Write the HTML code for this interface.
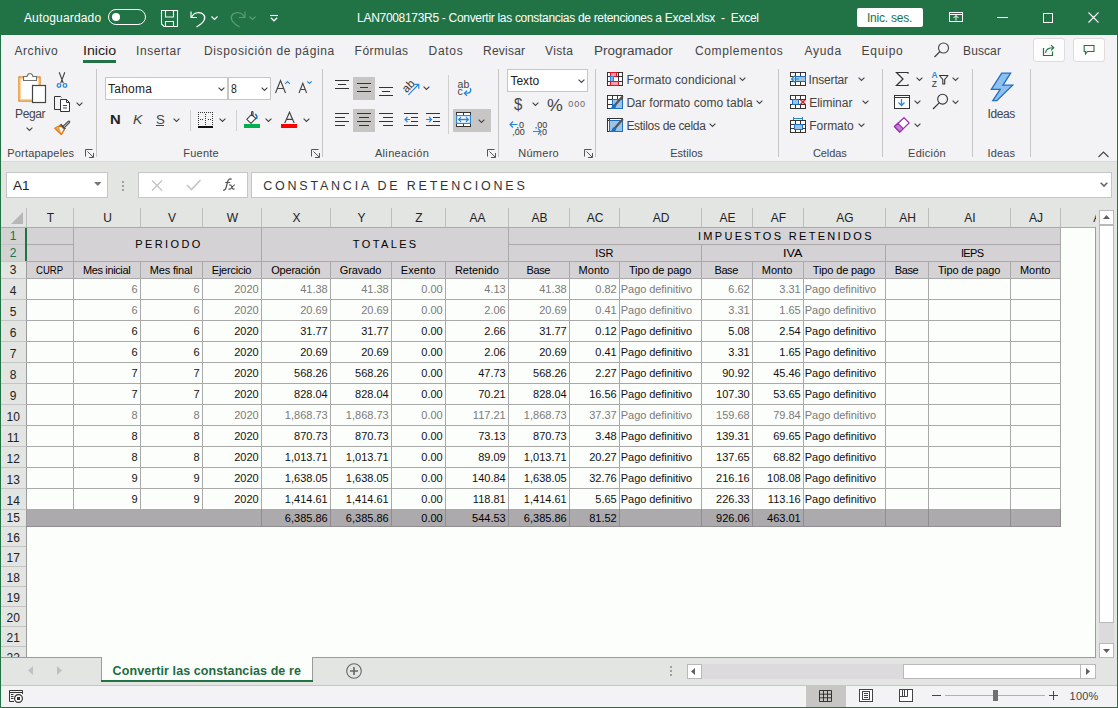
<!DOCTYPE html>
<html><head><meta charset="utf-8"><title>Excel</title>
<style>
html,body{margin:0;padding:0;}
body{width:1118px;height:708px;overflow:hidden;position:relative;background:#fcfefc;font-family:'Liberation Sans', sans-serif;}
.a{position:absolute;}
.t{position:absolute;white-space:pre;transform-origin:0 0;}
svg.a{overflow:visible;}
</style></head><body>
<div class="a" style="left:0px;top:0px;width:1118px;height:35px;background:#217346;"></div>
<div class="t" style="left:23.90px;top:11.80px;font-size:12px;line-height:12px;color:#ffffff;letter-spacing:0.163px;">Autoguardado</div>
<div class="a" style="left:108px;top:9px;width:38px;height:16px;border:1px solid #fff;border-radius:8px;box-sizing:border-box;"></div>
<div class="a" style="left:112px;top:13px;width:8px;height:8px;background:#fff;border-radius:50%;"></div>
<svg class="a" style="left:161px;top:10px;" width="17" height="17" viewBox="0 0 17 17"><path d="M0.5 0.5H16.5V16.5H3L0.5 14Z" fill="none" stroke="#fff" stroke-width="1.1"/><path d="M4.5 0.5V7H12.5V0.5M4.5 16.5V11.5H12.5V16.5" fill="none" stroke="#fff" stroke-width="1.1"/></svg>
<svg class="a" style="left:189px;top:10px;" width="20" height="18" viewBox="0 0 20 18"><path d="M2 1.5V7.5H8" fill="none" stroke="#fff" stroke-width="1.2"/><path d="M2.5 7C5 2.5 11 1 14.5 4.5C17.5 8 15.5 12 7.5 17" fill="none" stroke="#fff" stroke-width="1.2"/></svg>
<svg class="a" style="left:210.5px;top:15.5px;" width="7" height="4" viewBox="0 0 7 4"><path d="M0.5 0.5l3 3 3-3" fill="none" stroke="#fff" stroke-width="1.2"/></svg>
<svg class="a" style="left:227px;top:10px;" width="20" height="18" viewBox="0 0 20 18"><g transform="translate(20,0) scale(-1,1)"><path d="M2 1.5V7.5H8" fill="none" stroke="#5b9c76" stroke-width="1.2"/><path d="M2.5 7C5 2.5 11 1 14.5 4.5C17.5 8 15.5 12 7.5 17" fill="none" stroke="#5b9c76" stroke-width="1.2"/></g></svg>
<svg class="a" style="left:248.5px;top:15.5px;" width="7" height="4" viewBox="0 0 7 4"><path d="M0.5 0.5l3 3 3-3" fill="none" stroke="#5b9c76" stroke-width="1.1"/></svg>
<svg class="a" style="left:269.5px;top:14px;" width="8" height="8" viewBox="0 0 8 8"><path d="M0 1.5h8" stroke="#fff" stroke-width="1.1"/><path d="M0.8 3.8l3.2 3 3.2-3" fill="none" stroke="#fff" stroke-width="1.3"/></svg>
<div class="t" style="left:357.10px;top:12.30px;font-size:12px;line-height:12px;color:#ffffff;letter-spacing:-0.308px;">LAN7008173R5 - Convertir las constancias de retenciones a Excel.xlsx  -  Excel</div>
<div class="a" style="left:857px;top:8px;width:66px;height:19px;background:#ffffff;border-radius:2px;"></div>
<div class="t" style="left:867.00px;top:12.30px;font-size:12px;line-height:12px;color:#217346;letter-spacing:-0.218px;">Inic. ses.</div>
<svg class="a" style="left:949px;top:12px;" width="14" height="10" viewBox="0 0 14 10"><rect x="0.5" y="0.5" width="13" height="9" fill="none" stroke="#fff"/><path d="M0.5 2.5h13" stroke="#fff"/><path d="M7 8.5v-5M4.5 6l2.5-2.5 2.5 2.5" fill="none" stroke="#fff"/></svg>
<div class="a" style="left:997px;top:17px;width:11px;height:1px;background:#ffffff;"></div>
<div class="a" style="left:1043px;top:13px;width:10px;height:10px;border:1px solid #fff;box-sizing:border-box;"></div>
<svg class="a" style="left:1088px;top:12px;" width="11" height="11" viewBox="0 0 11 11"><path d="M0.5 0.5l10 10M10.5 0.5l-10 10" stroke="#fff" stroke-width="1.1"/></svg>
<div class="a" style="left:0px;top:35px;width:1118px;height:126px;background:#f3f2f5;"></div>
<div class="a" style="left:0px;top:161px;width:1118px;height:1px;background:#dadada;"></div>
<div class="t" style="left:14.60px;top:45.00px;font-size:12px;line-height:12px;color:#444444;letter-spacing:0.514px;">Archivo</div>
<div class="t" style="left:83.00px;top:45.00px;font-size:12px;line-height:12px;color:#222;transform:scaleX(1.1815);">Inicio</div>
<div class="t" style="left:136.10px;top:45.00px;font-size:12px;line-height:12px;color:#444444;letter-spacing:0.559px;">Insertar</div>
<div class="t" style="left:204.00px;top:45.00px;font-size:12px;line-height:12px;color:#444444;letter-spacing:0.644px;">Disposición de página</div>
<div class="t" style="left:354.60px;top:45.00px;font-size:12px;line-height:12px;color:#444444;letter-spacing:0.498px;">Fórmulas</div>
<div class="t" style="left:428.60px;top:45.00px;font-size:12px;line-height:12px;color:#444444;letter-spacing:0.685px;">Datos</div>
<div class="t" style="left:483.00px;top:45.00px;font-size:12px;line-height:12px;color:#444444;letter-spacing:0.235px;">Revisar</div>
<div class="t" style="left:545.10px;top:45.00px;font-size:12px;line-height:12px;color:#444444;letter-spacing:0.358px;">Vista</div>
<div class="t" style="left:593.90px;top:45.00px;font-size:12px;line-height:12px;color:#444444;transform:scaleX(1.1238);">Programador</div>
<div class="t" style="left:694.90px;top:45.00px;font-size:12px;line-height:12px;color:#444444;letter-spacing:0.654px;">Complementos</div>
<div class="t" style="left:804.60px;top:45.00px;font-size:12px;line-height:12px;color:#444444;letter-spacing:0.672px;">Ayuda</div>
<div class="t" style="left:861.60px;top:45.00px;font-size:12px;line-height:12px;color:#444444;letter-spacing:0.765px;">Equipo</div>
<div class="t" style="left:963.10px;top:45.00px;font-size:12px;line-height:12px;color:#444444;letter-spacing:0.088px;">Buscar</div>
<div class="a" style="left:83px;top:60px;width:33px;height:3px;background:#217346;"></div>
<svg class="a" style="left:934px;top:42px;" width="16" height="16" viewBox="0 0 16 16"><circle cx="9.5" cy="6" r="5" fill="none" stroke="#444" stroke-width="1.1"/><path d="M6 9.5l-5.5 5.5" stroke="#444" stroke-width="1.3"/></svg>
<div class="a" style="left:1033px;top:38px;width:32px;height:24px;background:#fcfdfc;border:1px solid #e0dcdc;border-radius:3px;box-sizing:border-box;"></div>
<svg class="a" style="left:1042px;top:43px;" width="15" height="14" viewBox="0 0 15 14"><path d="M1.5 5V12.5H10.5V8.5" fill="none" stroke="#217346" stroke-width="1.2"/><path d="M3.5 9.8C4 6.5 7 4.8 11 4.8M9 2.2L11.8 4.8L9 7.4" fill="none" stroke="#217346" stroke-width="1.1"/></svg>
<div class="a" style="left:1073px;top:38px;width:32px;height:24px;background:#fcfdfc;border:1px solid #e0dcdc;border-radius:3px;box-sizing:border-box;"></div>
<svg class="a" style="left:1083px;top:44px;" width="13" height="12" viewBox="0 0 13 12"><path d="M1.2 1.5H11V7.5H4.5L2.5 10V7.5H1.2Z" fill="none" stroke="#217346" stroke-width="1.1"/></svg>
<div class="a" style="left:96px;top:69px;width:1px;height:88px;background:#c8c6c4;"></div>
<div class="a" style="left:322px;top:69px;width:1px;height:88px;background:#c8c6c4;"></div>
<div class="a" style="left:498px;top:69px;width:1px;height:88px;background:#c8c6c4;"></div>
<div class="a" style="left:595px;top:69px;width:1px;height:88px;background:#c8c6c4;"></div>
<div class="a" style="left:778px;top:69px;width:1px;height:88px;background:#c8c6c4;"></div>
<div class="a" style="left:882px;top:69px;width:1px;height:88px;background:#c8c6c4;"></div>
<div class="a" style="left:972px;top:69px;width:1px;height:88px;background:#c8c6c4;"></div>
<div class="a" style="left:1030px;top:69px;width:1px;height:88px;background:#c8c6c4;"></div>
<div class="a" style="left:190px;top:110px;width:1px;height:21px;background:#d0d0d0;"></div>
<div class="a" style="left:236px;top:110px;width:1px;height:21px;background:#d0d0d0;"></div>
<div class="a" style="left:448px;top:75px;width:1px;height:59px;background:#d0d0d0;"></div>
<div class="t" style="left:7.30px;top:147.50px;font-size:11px;line-height:11px;color:#444444;letter-spacing:0.179px;">Portapapeles</div>
<div class="t" style="left:183.30px;top:147.50px;font-size:11px;line-height:11px;color:#444444;letter-spacing:0.210px;">Fuente</div>
<div class="t" style="left:374.90px;top:147.50px;font-size:11px;line-height:11px;color:#444444;letter-spacing:0.348px;">Alineación</div>
<div class="t" style="left:518.30px;top:147.50px;font-size:11px;line-height:11px;color:#444444;letter-spacing:0.255px;">Número</div>
<div class="t" style="left:670.20px;top:147.50px;font-size:11px;line-height:11px;color:#444444;letter-spacing:0.032px;">Estilos</div>
<div class="t" style="left:813.00px;top:147.50px;font-size:11px;line-height:11px;color:#444444;letter-spacing:-0.110px;">Celdas</div>
<div class="t" style="left:908.10px;top:147.50px;font-size:11px;line-height:11px;color:#444444;letter-spacing:0.254px;">Edición</div>
<div class="t" style="left:987.60px;top:147.50px;font-size:11px;line-height:11px;color:#444444;letter-spacing:0.095px;">Ideas</div>
<svg class="a" style="left:85px;top:149px;" width="9" height="9" viewBox="0 0 9 9"><path d="M0.5 7.5v-7h7" fill="none" stroke="#555"/><path d="M2.5 2.5l5.5 5.5M8.5 4v4.5h-4.5" fill="none" stroke="#555"/></svg>
<svg class="a" style="left:311px;top:149px;" width="9" height="9" viewBox="0 0 9 9"><path d="M0.5 7.5v-7h7" fill="none" stroke="#555"/><path d="M2.5 2.5l5.5 5.5M8.5 4v4.5h-4.5" fill="none" stroke="#555"/></svg>
<svg class="a" style="left:487px;top:149px;" width="9" height="9" viewBox="0 0 9 9"><path d="M0.5 7.5v-7h7" fill="none" stroke="#555"/><path d="M2.5 2.5l5.5 5.5M8.5 4v4.5h-4.5" fill="none" stroke="#555"/></svg>
<svg class="a" style="left:584px;top:149px;" width="9" height="9" viewBox="0 0 9 9"><path d="M0.5 7.5v-7h7" fill="none" stroke="#555"/><path d="M2.5 2.5l5.5 5.5M8.5 4v4.5h-4.5" fill="none" stroke="#555"/></svg>
<svg class="a" style="left:18px;top:72px;" width="30" height="32" viewBox="0 0 30 32"><rect x="1" y="5" width="21" height="24" fill="#fff" stroke="#e07800" stroke-width="1.2"/><rect x="2.5" y="6.5" width="18" height="21" fill="none" stroke="#fcd49a" stroke-width="1.2"/><path d="M5.5 8.5v-4h3.5c0.5-2 1.5-3 3-3s2.5 1 3 3h3.5v4z" fill="#fff" stroke="#6f6f6f" stroke-width="1.1"/><rect x="14.5" y="13.5" width="13" height="17" fill="#fff" stroke="#444" stroke-width="1.2"/></svg>
<div class="t" style="left:15.10px;top:107.80px;font-size:12px;line-height:12px;color:#444444;letter-spacing:-0.383px;">Pegar</div>
<svg class="a" style="left:26px;top:127px;" width="7" height="4" viewBox="0 0 7 4"><path d="M0.6 0.6l2.9 2.9 2.9-2.9" fill="none" stroke="#444" stroke-width="1.1"/></svg>
<svg class="a" style="left:56px;top:72px;" width="12" height="16" viewBox="0 0 12 16"><path d="M3.2 0.3L7.2 11M8.8 0.3L4.8 11" stroke="#444" stroke-width="1.1"/><circle cx="3" cy="13.5" r="1.8" fill="none" stroke="#2b88d8" stroke-width="1.3"/><circle cx="9" cy="13.5" r="1.8" fill="none" stroke="#2b88d8" stroke-width="1.3"/></svg>
<svg class="a" style="left:54px;top:95px;" width="17" height="17" viewBox="0 0 17 17"><path d="M6 14.5H0.5V1.5H6.5L7.5 2.5" fill="none" stroke="#333"/><path d="M6.5 4.5H12.5L15.5 7.5V16.5H6.5Z" fill="#fff" stroke="#333"/><path d="M12.5 4.5V7.5H15.5" fill="none" stroke="#333"/><path d="M9 10.5H13M9 13H13" stroke="#444"/></svg>
<svg class="a" style="left:76px;top:102px;" width="7" height="4" viewBox="0 0 7 4"><path d="M0.6 0.6l2.9 2.9 2.9-2.9" fill="none" stroke="#444" stroke-width="1.1"/></svg>
<svg class="a" style="left:54px;top:119px;" width="17" height="16" viewBox="0 0 17 16"><path d="M0.8 9.3L6.3 6.3L10.4 10.4L7.4 15.4Z" fill="#fff" stroke="#e07000" stroke-width="1.3" stroke-linejoin="round"/><path d="M1.5 9.3L5 7.5L7.5 15Z" fill="#f0a050"/><path d="M9.3 7.2L14.2 2.3C15 1.5 16.3 2.6 15.4 3.5L10.6 8.4" fill="#fff" stroke="#444" stroke-width="1.1"/><path d="M6.6 5.2L11.4 10" stroke="#444" stroke-width="1.6"/></svg>
<div class="a" style="left:105px;top:77px;width:123px;height:23px;background:#ffffff;border:1px solid #c8c6c4;box-sizing:border-box;"></div>
<div class="a" style="left:228px;top:77px;width:43px;height:23px;background:#ffffff;border:1px solid #c8c6c4;box-sizing:border-box;"></div>
<div class="t" style="left:108.00px;top:82.80px;font-size:12px;line-height:12px;color:#222;letter-spacing:0.239px;">Tahoma</div>
<svg class="a" style="left:218px;top:87px;" width="7" height="4" viewBox="0 0 7 4"><path d="M0.6 0.6l2.9 2.9 2.9-2.9" fill="none" stroke="#444" stroke-width="1.1"/></svg>
<div class="t" style="left:230.60px;top:82.80px;font-size:12px;line-height:12px;color:#222;transform:scaleX(0.8673);">8</div>
<svg class="a" style="left:261px;top:87px;" width="7" height="4" viewBox="0 0 7 4"><path d="M0.6 0.6l2.9 2.9 2.9-2.9" fill="none" stroke="#444" stroke-width="1.1"/></svg>
<svg class="a" style="left:274px;top:79px;" width="40" height="15" viewBox="0 0 40 15"><path d="M1.5 14L6.5 1.5L11.5 14M3.3 9.5H9.7" fill="none" stroke="#444" stroke-width="1.15"/><path d="M11.2 4.8L13.5 2.5L15.8 4.8" fill="none" stroke="#2b88d8" stroke-width="1.2"/><path d="M25 14L28.8 4.3L32.6 14M26.4 10.5H31.2" fill="none" stroke="#444" stroke-width="1.1"/><path d="M33.3 2.3L35.5 4.5L37.7 2.3" fill="none" stroke="#2b88d8" stroke-width="1.2"/></svg>
<div class="t" style="left:110.10px;top:113.60px;font-size:12px;line-height:12px;color:#222;font-weight:700;transform:scaleX(1.2339);">N</div>
<div class="t" style="left:132.60px;top:113.60px;font-size:12px;line-height:12px;color:#444;font-family:'Liberation Sans', sans-serif;font-style:italic;transform:scaleX(1.1727);">K</div>
<div class="t" style="left:155.60px;top:113.60px;font-size:12px;line-height:12px;color:#444;transform:scaleX(1.0979);">S</div>
<div class="a" style="left:156px;top:125px;width:8px;height:1px;background:#444;"></div>
<svg class="a" style="left:173px;top:118px;" width="7" height="4" viewBox="0 0 7 4"><path d="M0.6 0.6l2.9 2.9 2.9-2.9" fill="none" stroke="#444" stroke-width="1.1"/></svg>
<svg class="a" style="left:198px;top:112px;" width="16" height="16" viewBox="0 0 16 16"><rect x="0" y="0" width="1" height="1" fill="#333"/><rect x="2" y="0" width="1" height="1" fill="#333"/><rect x="4" y="0" width="1" height="1" fill="#333"/><rect x="6" y="0" width="1" height="1" fill="#333"/><rect x="8" y="0" width="1" height="1" fill="#333"/><rect x="10" y="0" width="1" height="1" fill="#333"/><rect x="12" y="0" width="1" height="1" fill="#333"/><rect x="14" y="0" width="1" height="1" fill="#333"/><rect x="0" y="2" width="1" height="1" fill="#333"/><rect x="14" y="2" width="1" height="1" fill="#333"/><rect x="7" y="2" width="1" height="1" fill="#333"/><rect x="0" y="4" width="1" height="1" fill="#333"/><rect x="14" y="4" width="1" height="1" fill="#333"/><rect x="7" y="4" width="1" height="1" fill="#333"/><rect x="0" y="6" width="1" height="1" fill="#333"/><rect x="14" y="6" width="1" height="1" fill="#333"/><rect x="7" y="6" width="1" height="1" fill="#333"/><rect x="0" y="8" width="1" height="1" fill="#333"/><rect x="14" y="8" width="1" height="1" fill="#333"/><rect x="7" y="8" width="1" height="1" fill="#333"/><rect x="0" y="10" width="1" height="1" fill="#333"/><rect x="14" y="10" width="1" height="1" fill="#333"/><rect x="7" y="10" width="1" height="1" fill="#333"/><rect x="0" y="12" width="1" height="1" fill="#333"/><rect x="14" y="12" width="1" height="1" fill="#333"/><rect x="7" y="12" width="1" height="1" fill="#333"/><rect x="2" y="7" width="1" height="1" fill="#333"/><rect x="4" y="7" width="1" height="1" fill="#333"/><rect x="10" y="7" width="1" height="1" fill="#333"/><rect x="12" y="7" width="1" height="1" fill="#333"/><rect x="0" y="14" width="15" height="2" fill="#111"/></svg>
<svg class="a" style="left:219px;top:118px;" width="7" height="4" viewBox="0 0 7 4"><path d="M0.6 0.6l2.9 2.9 2.9-2.9" fill="none" stroke="#444" stroke-width="1.1"/></svg>
<svg class="a" style="left:243px;top:110px;" width="19" height="18" viewBox="0 0 19 18"><path d="M3.8 9.3L8.6 4.3L12.8 8.5L8 13.3Z" fill="#fff" stroke="#444" stroke-width="1.1" stroke-linejoin="round"/><path d="M8.6 4.3V2.2C8.6 1.3 10 1.3 10 2.2V6.5" fill="none" stroke="#444" stroke-width="1.1"/><path d="M12 4.2C13.4 4.6 14.2 6.5 13.6 9" fill="none" stroke="#1e6fc4" stroke-width="1.5"/><rect x="1" y="14" width="16" height="4" fill="#00b050"/></svg>
<svg class="a" style="left:265px;top:118px;" width="7" height="4" viewBox="0 0 7 4"><path d="M0.6 0.6l2.9 2.9 2.9-2.9" fill="none" stroke="#444" stroke-width="1.1"/></svg>
<svg class="a" style="left:283px;top:111px;" width="13" height="13" viewBox="0 0 13 13"><path d="M1.8 12L6.5 1.2L11.2 12M3.6 8.3H9.4" fill="none" stroke="#444" stroke-width="1.15"/></svg>
<div class="a" style="left:281px;top:124px;width:16px;height:4px;background:#ff0000;"></div>
<svg class="a" style="left:303px;top:118px;" width="7" height="4" viewBox="0 0 7 4"><path d="M0.6 0.6l2.9 2.9 2.9-2.9" fill="none" stroke="#444" stroke-width="1.1"/></svg>
<div class="a" style="left:353px;top:77px;width:22px;height:23px;background:#c8c6c4;"></div>
<div class="a" style="left:353px;top:109px;width:22px;height:23px;background:#c8c6c4;"></div>
<div class="a" style="left:335px;top:80px;width:14px;height:1px;background:#333;"></div>
<div class="a" style="left:338px;top:84px;width:8px;height:1px;background:#333;"></div>
<div class="a" style="left:335px;top:88px;width:14px;height:1px;background:#333;"></div>
<div class="a" style="left:357px;top:83px;width:14px;height:1px;background:#333;"></div>
<div class="a" style="left:360px;top:87px;width:8px;height:1px;background:#333;"></div>
<div class="a" style="left:357px;top:91px;width:14px;height:1px;background:#333;"></div>
<div class="a" style="left:379px;top:87px;width:14px;height:1px;background:#333;"></div>
<div class="a" style="left:382px;top:91px;width:8px;height:1px;background:#333;"></div>
<div class="a" style="left:379px;top:95px;width:14px;height:1px;background:#333;"></div>
<div class="a" style="left:335px;top:113px;width:14px;height:1px;background:#333;"></div>
<div class="a" style="left:335px;top:117px;width:10px;height:1px;background:#333;"></div>
<div class="a" style="left:335px;top:121px;width:14px;height:1px;background:#333;"></div>
<div class="a" style="left:335px;top:125px;width:10px;height:1px;background:#333;"></div>
<div class="a" style="left:357px;top:113px;width:14px;height:1px;background:#333;"></div>
<div class="a" style="left:359px;top:117px;width:10px;height:1px;background:#333;"></div>
<div class="a" style="left:357px;top:121px;width:14px;height:1px;background:#333;"></div>
<div class="a" style="left:359px;top:125px;width:10px;height:1px;background:#333;"></div>
<div class="a" style="left:379px;top:113px;width:14px;height:1px;background:#333;"></div>
<div class="a" style="left:383px;top:117px;width:10px;height:1px;background:#333;"></div>
<div class="a" style="left:379px;top:121px;width:14px;height:1px;background:#333;"></div>
<div class="a" style="left:383px;top:125px;width:10px;height:1px;background:#333;"></div>
<div class="a" style="left:404px;top:113px;width:14px;height:1px;background:#333;"></div>
<div class="a" style="left:404px;top:125px;width:14px;height:1px;background:#333;"></div>
<div class="a" style="left:411px;top:117px;width:7px;height:1px;background:#333;"></div>
<div class="a" style="left:411px;top:121px;width:7px;height:1px;background:#333;"></div>
<svg class="a" style="left:404px;top:116px;" width="7" height="7" viewBox="0 0 7 7"><path d="M6 3.5h-5M3.5 1l-2.5 2.5 2.5 2.5" fill="none" stroke="#2b88d8" stroke-width="1.2"/></svg>
<div class="a" style="left:426px;top:113px;width:14px;height:1px;background:#333;"></div>
<div class="a" style="left:426px;top:125px;width:14px;height:1px;background:#333;"></div>
<div class="a" style="left:433px;top:117px;width:7px;height:1px;background:#333;"></div>
<div class="a" style="left:433px;top:121px;width:7px;height:1px;background:#333;"></div>
<svg class="a" style="left:426px;top:116px;" width="7" height="7" viewBox="0 0 7 7"><path d="M0 3.5h5M3 1l2.5 2.5-2.5 2.5" fill="none" stroke="#2b88d8" stroke-width="1.2"/></svg>
<svg class="a" style="left:402px;top:78px;" width="20" height="18" viewBox="0 0 20 18"><text x="0" y="0" transform="translate(4.6,15.2) rotate(-45)" font-family="Liberation Sans" font-size="11.5" fill="#333">ab</text><path d="M6.3 16.8L16.5 6.5M12.3 6.3H16.8V10.8" fill="none" stroke="#2b88d8" stroke-width="1.2"/></svg>
<svg class="a" style="left:423px;top:86px;" width="7" height="4" viewBox="0 0 7 4"><path d="M0.6 0.6l2.9 2.9 2.9-2.9" fill="none" stroke="#444" stroke-width="1.1"/></svg>
<svg class="a" style="left:457px;top:80px;" width="17" height="17" viewBox="0 0 17 17"><text x="0.6" y="8.4" font-family="Liberation Sans" font-size="10.5" fill="#444">ab</text><text x="0.6" y="15.3" font-family="Liberation Sans" font-size="10.5" fill="#444">c</text><path d="M13.2 8.2C14.6 10 13.6 13.2 10.5 13.2H7.6M10 10.8L7.4 13.2L10 15.8" fill="none" stroke="#2b88d8" stroke-width="1.3"/></svg>
<div class="a" style="left:453px;top:109px;width:38px;height:23px;background:#c8c6c4;"></div>
<svg class="a" style="left:456px;top:112px;" width="16" height="15" viewBox="0 0 16 15"><rect x="0.5" y="0.5" width="14" height="14" fill="#fff" stroke="#333"/><path d="M7.5 0.5V3.5M7.5 11.5V14.5" stroke="#333"/><rect x="0.6" y="3.6" width="13.8" height="7.8" fill="#fff" stroke="#2b88d8" stroke-width="1.2"/><path d="M2.6 7.5H12.4M5 5.1L2.6 7.5L5 9.9M10 5.1L12.4 7.5L10 9.9" fill="none" stroke="#2b88d8" stroke-width="1.3"/></svg>
<svg class="a" style="left:478px;top:119px;" width="7" height="4" viewBox="0 0 7 4"><path d="M0.6 0.6l2.9 2.9 2.9-2.9" fill="none" stroke="#444" stroke-width="1.1"/></svg>
<div class="a" style="left:507px;top:69px;width:81px;height:23px;background:#ffffff;border:1px solid #c8c6c4;box-sizing:border-box;"></div>
<div class="t" style="left:510.40px;top:74.80px;font-size:12px;line-height:12px;color:#222;letter-spacing:0.028px;">Texto</div>
<svg class="a" style="left:578px;top:79px;" width="7" height="4" viewBox="0 0 7 4"><path d="M0.6 0.6l2.9 2.9 2.9-2.9" fill="none" stroke="#444" stroke-width="1.1"/></svg>
<div class="t" style="left:513.60px;top:96.50px;font-size:16px;line-height:16px;color:#444;transform:scaleX(0.9319);">$</div>
<svg class="a" style="left:532px;top:102px;" width="7" height="4" viewBox="0 0 7 4"><path d="M0.6 0.6l2.9 2.9 2.9-2.9" fill="none" stroke="#444" stroke-width="1.1"/></svg>
<div class="t" style="left:547.10px;top:96.50px;font-size:17px;line-height:17px;color:#444;transform:scaleX(1.0446);">%</div>
<div class="t" style="left:568.30px;top:100.00px;font-size:9px;line-height:9px;color:#666;letter-spacing:0.884px;">000</div>
<svg class="a" style="left:509px;top:120px;" width="17" height="16" viewBox="0 0 17 16"><path d="M8.5 4.5h-7.5M4 1.5l-3 3 3 3" fill="none" stroke="#2b88d8" stroke-width="1.2"/><text x="7.5" y="8.3" font-family="Liberation Sans" font-size="9" fill="#333">,0</text><text x="3.2" y="15.2" font-family="Liberation Sans" font-size="9" fill="#333">,00</text></svg>
<svg class="a" style="left:532px;top:120px;" width="17" height="16" viewBox="0 0 17 16"><text x="2.8" y="8.3" font-family="Liberation Sans" font-size="9" fill="#333">,00</text><path d="M1 11.5h8M6 8.5l3 3-3 3" fill="none" stroke="#2b88d8" stroke-width="1.2"/><text x="7.6" y="15.2" font-family="Liberation Sans" font-size="9" fill="#333">,0</text></svg>
<svg class="a" style="left:607px;top:72px;" width="16" height="14" viewBox="0 0 16 14"><rect x="0.5" y="0.5" width="15" height="13" fill="#fff" stroke="#333"/><path d="M0.5 4.5H15.5M0.5 9.5H15.5M11.5 0.5V13.5" stroke="#333"/><rect x="3.5" y="0.5" width="6" height="4" fill="#f4a0a8" stroke="#e81123"/><rect x="3.5" y="4.5" width="3" height="5" fill="#8ab4e0" stroke="#2b88d8"/><rect x="3.5" y="9.5" width="8" height="4" fill="#f4a0a8" stroke="#e81123"/></svg>
<div class="t" style="left:626.40px;top:74.00px;font-size:12px;line-height:12px;color:#444444;letter-spacing:0.080px;">Formato condicional</div>
<svg class="a" style="left:739px;top:77px;" width="7" height="4" viewBox="0 0 7 4"><path d="M0.6 0.6l2.9 2.9 2.9-2.9" fill="none" stroke="#444" stroke-width="1.1"/></svg>
<svg class="a" style="left:607px;top:95px;" width="17" height="15" viewBox="0 0 17 15"><rect x="0.5" y="0.5" width="15" height="13" fill="#fff" stroke="#333"/><path d="M0.5 4.5H15.5M0.5 9.5H5.5M5.5 0.5V13.5M10.5 0.5V4.5" stroke="#333"/><rect x="5.5" y="4.5" width="10" height="9" fill="#9cc3e6" stroke="#1e6fc4"/><path d="M15.3 1.8L8.6 9.2" stroke="#555" stroke-width="2.2" stroke-linecap="round"/><path d="M8.8 9.2c-1.8-0.8-3.4 0.3-3.8 2.2-0.3 1.2-1.5 2-3 2.3 2.3 0.7 5.2 0.4 6.6-1.3 0.9-1 1-2.2 0.2-3.2z" fill="#1e6fc4"/></svg>
<div class="t" style="left:626.40px;top:97.00px;font-size:12px;line-height:12px;color:#444444;letter-spacing:0.048px;">Dar formato como tabla</div>
<svg class="a" style="left:756px;top:100px;" width="7" height="4" viewBox="0 0 7 4"><path d="M0.6 0.6l2.9 2.9 2.9-2.9" fill="none" stroke="#444" stroke-width="1.1"/></svg>
<svg class="a" style="left:607px;top:118px;" width="17" height="15" viewBox="0 0 17 15"><rect x="0.5" y="0.5" width="15" height="13" fill="#fff" stroke="#333"/><path d="M0.5 2.5H15.5M2.5 0.5V13.5" stroke="#333"/><rect x="2.5" y="2.5" width="13" height="11" fill="#9cc3e6" stroke="#1e6fc4"/><path d="M15.3 1.8L8.6 9.2" stroke="#555" stroke-width="2.2" stroke-linecap="round"/><path d="M8.8 9.2c-1.8-0.8-3.4 0.3-3.8 2.2-0.3 1.2-1.5 2-3 2.3 2.3 0.7 5.2 0.4 6.6-1.3 0.9-1 1-2.2 0.2-3.2z" fill="#1e6fc4"/></svg>
<div class="t" style="left:626.40px;top:120.00px;font-size:12px;line-height:12px;color:#444444;letter-spacing:-0.303px;">Estilos de celda</div>
<svg class="a" style="left:709px;top:123px;" width="7" height="4" viewBox="0 0 7 4"><path d="M0.6 0.6l2.9 2.9 2.9-2.9" fill="none" stroke="#444" stroke-width="1.1"/></svg>
<svg class="a" style="left:790px;top:72px;" width="16" height="14" viewBox="0 0 16 14"><rect x="0.5" y="0.5" width="15" height="13" fill="#fff" stroke="#333"/><path d="M0.5 4.5H15.5M0.5 9.5H15.5M5.5 0.5V13.5M10.5 0.5V13.5" stroke="#333"/><rect x="5.5" y="4.5" width="10" height="5" fill="#9cc3e6" stroke="#1e6fc4"/><rect x="0" y="5" width="5" height="4" fill="#f3f2f5"/><path d="M9 7H1.8M4.8 3.6L1.5 7L4.8 10.4" fill="none" stroke="#2b88d8" stroke-width="1.2"/></svg>
<div class="t" style="left:808.60px;top:74.00px;font-size:12px;line-height:12px;color:#444444;letter-spacing:-0.170px;">Insertar</div>
<svg class="a" style="left:858px;top:77px;" width="7" height="4" viewBox="0 0 7 4"><path d="M0.6 0.6l2.9 2.9 2.9-2.9" fill="none" stroke="#444" stroke-width="1.1"/></svg>
<svg class="a" style="left:790px;top:95px;" width="16" height="14" viewBox="0 0 16 14"><rect x="0.5" y="0.5" width="15" height="13" fill="#fff" stroke="#333"/><path d="M0.5 4.5H15.5M0.5 9.5H15.5M5.5 0.5V13.5M10.5 0.5V13.5" stroke="#333"/><rect x="0" y="5" width="2.5" height="4" fill="#f3f2f5"/><rect x="10" y="5" width="6" height="4" fill="#f3f2f5"/><rect x="2.5" y="4.5" width="6" height="5" fill="#9cc3e6" stroke="#1e6fc4"/><path d="M10.5 4.8L15.2 9.3M15.2 4.8L10.5 9.3" stroke="#e81123" stroke-width="1.2"/></svg>
<div class="t" style="left:809.20px;top:97.00px;font-size:12px;line-height:12px;color:#444444;letter-spacing:-0.021px;">Eliminar</div>
<svg class="a" style="left:862px;top:100px;" width="7" height="4" viewBox="0 0 7 4"><path d="M0.6 0.6l2.9 2.9 2.9-2.9" fill="none" stroke="#444" stroke-width="1.1"/></svg>
<svg class="a" style="left:790px;top:117px;" width="16" height="16" viewBox="0 0 16 16"><path d="M3.5 1.5H12.5M3.5 0V3M12.5 0V3" stroke="#2b88d8"/><rect x="0.5" y="3.5" width="15" height="12" fill="#fff" stroke="#333"/><path d="M0.5 7.5H15.5M0.5 11.5H15.5M5.5 3.5V15.5M10.5 3.5V15.5" stroke="#333"/><rect x="4.5" y="7.5" width="8" height="5" fill="#9cc3e6" stroke="#1e6fc4"/></svg>
<div class="t" style="left:809.20px;top:120.00px;font-size:12px;line-height:12px;color:#444444;letter-spacing:-0.015px;">Formato</div>
<svg class="a" style="left:858px;top:123px;" width="7" height="4" viewBox="0 0 7 4"><path d="M0.6 0.6l2.9 2.9 2.9-2.9" fill="none" stroke="#444" stroke-width="1.1"/></svg>
<svg class="a" style="left:895px;top:71px;" width="14" height="16" viewBox="0 0 14 16"><path d="M13 2.8V1.5H1.5L8 8L1.5 14.5H13V13.2" fill="none" stroke="#333" stroke-width="1.2"/></svg>
<svg class="a" style="left:916px;top:77px;" width="7" height="4" viewBox="0 0 7 4"><path d="M0.6 0.6l2.9 2.9 2.9-2.9" fill="none" stroke="#444" stroke-width="1.1"/></svg>
<svg class="a" style="left:931px;top:71px;" width="18" height="17" viewBox="0 0 18 17"><text x="0.5" y="6.8" font-family="Liberation Sans" font-size="8.5" font-weight="700" fill="#2b88d8">A</text><text x="0.8" y="15.8" font-family="Liberation Sans" font-size="8.5" fill="#333">Z</text><path d="M8.5 4.5h8.5l-3.3 4v4.5h-1.9v-4.5z" fill="none" stroke="#333" stroke-width="1.1" stroke-linejoin="round"/></svg>
<svg class="a" style="left:952px;top:77px;" width="7" height="4" viewBox="0 0 7 4"><path d="M0.6 0.6l2.9 2.9 2.9-2.9" fill="none" stroke="#444" stroke-width="1.1"/></svg>
<svg class="a" style="left:894px;top:95px;" width="16" height="14" viewBox="0 0 16 14"><rect x="0.5" y="0.5" width="15" height="13" fill="#fff" stroke="#333"/><path d="M0.5 2.5h15" stroke="#333"/><path d="M7.5 4v6.5M4.5 7.5l3 3 3-3" fill="none" stroke="#2b88d8" stroke-width="1.3"/></svg>
<svg class="a" style="left:914px;top:100px;" width="7" height="4" viewBox="0 0 7 4"><path d="M0.6 0.6l2.9 2.9 2.9-2.9" fill="none" stroke="#444" stroke-width="1.1"/></svg>
<svg class="a" style="left:932px;top:94px;" width="16" height="16" viewBox="0 0 16 16"><circle cx="10.6" cy="5.2" r="4.9" fill="none" stroke="#333" stroke-width="1.1"/><path d="M7.2 8.8L1 15" stroke="#333" stroke-width="1.2"/></svg>
<svg class="a" style="left:952px;top:100px;" width="7" height="4" viewBox="0 0 7 4"><path d="M0.6 0.6l2.9 2.9 2.9-2.9" fill="none" stroke="#444" stroke-width="1.1"/></svg>
<svg class="a" style="left:894px;top:117px;" width="16" height="16" viewBox="0 0 16 16"><path d="M0.5 9.5L10 0.7L15.2 5.9L5.7 15.1Z" fill="#fff" stroke="#9b30b0" stroke-width="1.3" stroke-linejoin="round"/><path d="M0.5 9.5L4 6.3L9.2 11.6L5.7 15.1Z" fill="#c47fd4" stroke="#9b30b0" stroke-width="1.2" stroke-linejoin="round"/></svg>
<svg class="a" style="left:914px;top:123px;" width="7" height="4" viewBox="0 0 7 4"><path d="M0.6 0.6l2.9 2.9 2.9-2.9" fill="none" stroke="#444" stroke-width="1.1"/></svg>
<svg class="a" style="left:991px;top:72px;" width="23" height="30" viewBox="0 0 23 30"><path d="M10.7 1.2L19.6 1.2L12 13.2L21.7 13.2L5.8 28.7L1.8 28.7L9.2 17.4L0.3 17.4Z" fill="#8dc0ee" stroke="#1f6fc5" stroke-width="1.3" stroke-linejoin="miter"/></svg>
<div class="t" style="left:987.60px;top:108.00px;font-size:12px;line-height:12px;color:#444444;letter-spacing:-0.440px;">Ideas</div>
<svg class="a" style="left:1098px;top:151px;" width="11" height="7" viewBox="0 0 11 7"><path d="M0.5 6l5-5 5 5" fill="none" stroke="#444" stroke-width="1.1"/></svg>
<div class="a" style="left:1px;top:162px;width:1116px;height:46px;background:#e3e5e2;"></div>
<div class="a" style="left:6px;top:172px;width:102px;height:26px;background:#ffffff;border:1px solid #c6c6c6;box-sizing:border-box;"></div>
<div class="t" style="left:12.60px;top:180.00px;font-size:12px;line-height:12px;color:#222;transform:scaleX(1.1302);">A1</div>
<svg class="a" style="left:94px;top:182px;" width="8" height="5" viewBox="0 0 8 5"><path d="M0 0h7.5l-3.75 4z" fill="#777"/></svg>
<div class="a" style="left:122px;top:181px;width:2px;height:2px;background:#a0a0a0;"></div>
<div class="a" style="left:122px;top:185px;width:2px;height:2px;background:#a0a0a0;"></div>
<div class="a" style="left:122px;top:189px;width:2px;height:2px;background:#a0a0a0;"></div>
<div class="a" style="left:138px;top:172px;width:110px;height:26px;background:#ffffff;border:1px solid #c6c6c6;box-sizing:border-box;"></div>
<svg class="a" style="left:151px;top:180px;" width="12" height="11" viewBox="0 0 12 11"><path d="M1 0.5l10 10M11 0.5l-10 10" stroke="#c3c3c3" stroke-width="1.3"/></svg>
<svg class="a" style="left:186px;top:179px;" width="15" height="12" viewBox="0 0 15 12"><path d="M1 6l4.5 4.5 9-9.5" fill="none" stroke="#c3c3c3" stroke-width="1.6"/></svg>
<svg class="a" style="left:222px;top:178px;" width="14" height="14" viewBox="0 0 14 14"><path d="M1.2 12.2C2.8 12.6 3.6 11.5 4.2 9.2L5.8 3.2C6.3 1.3 7.6 0.6 9.6 1.2" fill="none" stroke="#555" stroke-width="1.3"/><path d="M3.2 4.5H8.2" stroke="#555" stroke-width="1.1"/><path d="M7.2 7.2C8.6 6.4 9.2 7.2 9.8 8.8L10.4 10.4C10.9 11.4 11.6 11.4 12.6 10.6M12.8 6.8C11.8 7.2 10.2 9 8.8 10.6C8 11.4 7.4 11.4 6.6 10.8" fill="none" stroke="#555" stroke-width="1.15"/></svg>
<div class="a" style="left:251px;top:172px;width:861px;height:26px;background:#ffffff;border:1px solid #c6c6c6;box-sizing:border-box;"></div>
<div class="t" style="left:263.20px;top:179.80px;font-size:12.5px;line-height:12.5px;color:#333;letter-spacing:2.778px;">CONSTANCIA DE RETENCIONES</div>
<svg class="a" style="left:1100px;top:182px;" width="8" height="6" viewBox="0 0 8 6"><path d="M0.7 0.7l3.3 3.3 3.3-3.3" fill="none" stroke="#666" stroke-width="1.6"/></svg>
<div class="a" style="left:1px;top:208px;width:1116px;height:20px;background:#e3e5e2;"></div>
<div class="a" style="left:1px;top:228px;width:25px;height:430px;background:#e3e5e2;"></div>
<div class="a" style="left:1px;top:227px;width:1094px;height:1px;background:#ababab;"></div>
<div class="a" style="left:73px;top:208px;width:1px;height:19px;background:#bdbdbd;"></div>
<div class="a" style="left:140px;top:208px;width:1px;height:19px;background:#bdbdbd;"></div>
<div class="a" style="left:202px;top:208px;width:1px;height:19px;background:#bdbdbd;"></div>
<div class="a" style="left:261px;top:208px;width:1px;height:19px;background:#bdbdbd;"></div>
<div class="a" style="left:330px;top:208px;width:1px;height:19px;background:#bdbdbd;"></div>
<div class="a" style="left:391px;top:208px;width:1px;height:19px;background:#bdbdbd;"></div>
<div class="a" style="left:445px;top:208px;width:1px;height:19px;background:#bdbdbd;"></div>
<div class="a" style="left:508px;top:208px;width:1px;height:19px;background:#bdbdbd;"></div>
<div class="a" style="left:569px;top:208px;width:1px;height:19px;background:#bdbdbd;"></div>
<div class="a" style="left:619px;top:208px;width:1px;height:19px;background:#bdbdbd;"></div>
<div class="a" style="left:701px;top:208px;width:1px;height:19px;background:#bdbdbd;"></div>
<div class="a" style="left:752px;top:208px;width:1px;height:19px;background:#bdbdbd;"></div>
<div class="a" style="left:803px;top:208px;width:1px;height:19px;background:#bdbdbd;"></div>
<div class="a" style="left:885px;top:208px;width:1px;height:19px;background:#bdbdbd;"></div>
<div class="a" style="left:928px;top:208px;width:1px;height:19px;background:#bdbdbd;"></div>
<div class="a" style="left:1010px;top:208px;width:1px;height:19px;background:#bdbdbd;"></div>
<div class="a" style="left:1060px;top:208px;width:1px;height:19px;background:#bdbdbd;"></div>
<div class="a" style="left:26px;top:208px;width:1px;height:19px;background:#bdbdbd;"></div>
<svg class="a" style="left:11px;top:212px;" width="13" height="12" viewBox="0 0 13 12"><path d="M12 0v12h-12z" fill="#b7b7b7"/></svg>
<div class="t" style="left:46.83px;top:212.00px;font-size:12px;line-height:12px;color:#222;">T</div>
<div class="t" style="left:103.16px;top:212.00px;font-size:12px;line-height:12px;color:#222;">U</div>
<div class="t" style="left:167.99px;top:212.00px;font-size:12px;line-height:12px;color:#222;">V</div>
<div class="t" style="left:226.84px;top:212.00px;font-size:12px;line-height:12px;color:#222;">W</div>
<div class="t" style="left:292.49px;top:212.00px;font-size:12px;line-height:12px;color:#222;">X</div>
<div class="t" style="left:357.49px;top:212.00px;font-size:12px;line-height:12px;color:#222;">Y</div>
<div class="t" style="left:415.33px;top:212.00px;font-size:12px;line-height:12px;color:#222;">Z</div>
<div class="t" style="left:469.49px;top:212.00px;font-size:12px;line-height:12px;color:#222;">AA</div>
<div class="t" style="left:531.49px;top:212.00px;font-size:12px;line-height:12px;color:#222;">AB</div>
<div class="t" style="left:586.66px;top:212.00px;font-size:12px;line-height:12px;color:#222;">AC</div>
<div class="t" style="left:652.66px;top:212.00px;font-size:12px;line-height:12px;color:#222;">AD</div>
<div class="t" style="left:719.49px;top:212.00px;font-size:12px;line-height:12px;color:#222;">AE</div>
<div class="t" style="left:770.83px;top:212.00px;font-size:12px;line-height:12px;color:#222;">AF</div>
<div class="t" style="left:836.33px;top:212.00px;font-size:12px;line-height:12px;color:#222;">AG</div>
<div class="t" style="left:899.16px;top:212.00px;font-size:12px;line-height:12px;color:#222;">AH</div>
<div class="t" style="left:964.33px;top:212.00px;font-size:12px;line-height:12px;color:#222;">AI</div>
<div class="t" style="left:1028.99px;top:212.00px;font-size:12px;line-height:12px;color:#222;">AJ</div>
<div class="t" style="left:1093.20px;top:212.00px;font-size:12px;line-height:12px;color:#222;">A</div>
<div class="a" style="left:27px;top:228px;width:1068px;height:429px;background:#fcfefc;"></div>
<div class="a" style="left:1095px;top:227px;width:1px;height:430px;background:#9b9b9b;"></div>
<div class="a" style="left:1px;top:228px;width:25px;height:33px;background:#d2d2d2;"></div>
<div class="a" style="left:1px;top:244px;width:25px;height:1px;background:#c4c4c4;"></div>
<div class="t" style="left:9.86px;top:230.00px;font-size:12px;line-height:12px;color:#217346;">1</div>
<div class="a" style="left:1px;top:261px;width:25px;height:1px;background:#c4c4c4;"></div>
<div class="t" style="left:9.86px;top:247.00px;font-size:12px;line-height:12px;color:#217346;">2</div>
<div class="a" style="left:1px;top:278px;width:25px;height:1px;background:#c4c4c4;"></div>
<div class="t" style="left:9.86px;top:264.00px;font-size:12px;line-height:12px;color:#222;">3</div>
<div class="a" style="left:1px;top:299px;width:25px;height:1px;background:#c4c4c4;"></div>
<div class="t" style="left:9.86px;top:285.00px;font-size:12px;line-height:12px;color:#222;">4</div>
<div class="a" style="left:1px;top:320px;width:25px;height:1px;background:#c4c4c4;"></div>
<div class="t" style="left:9.86px;top:306.00px;font-size:12px;line-height:12px;color:#222;">5</div>
<div class="a" style="left:1px;top:341px;width:25px;height:1px;background:#c4c4c4;"></div>
<div class="t" style="left:9.86px;top:327.00px;font-size:12px;line-height:12px;color:#222;">6</div>
<div class="a" style="left:1px;top:362px;width:25px;height:1px;background:#c4c4c4;"></div>
<div class="t" style="left:9.86px;top:348.00px;font-size:12px;line-height:12px;color:#222;">7</div>
<div class="a" style="left:1px;top:383px;width:25px;height:1px;background:#c4c4c4;"></div>
<div class="t" style="left:9.86px;top:369.00px;font-size:12px;line-height:12px;color:#222;">8</div>
<div class="a" style="left:1px;top:404px;width:25px;height:1px;background:#c4c4c4;"></div>
<div class="t" style="left:9.86px;top:390.00px;font-size:12px;line-height:12px;color:#222;">9</div>
<div class="a" style="left:1px;top:425px;width:25px;height:1px;background:#c4c4c4;"></div>
<div class="t" style="left:6.52px;top:411.00px;font-size:12px;line-height:12px;color:#222;">10</div>
<div class="a" style="left:1px;top:446px;width:25px;height:1px;background:#c4c4c4;"></div>
<div class="t" style="left:6.97px;top:432.00px;font-size:12px;line-height:12px;color:#222;">11</div>
<div class="a" style="left:1px;top:467px;width:25px;height:1px;background:#c4c4c4;"></div>
<div class="t" style="left:6.52px;top:453.00px;font-size:12px;line-height:12px;color:#222;">12</div>
<div class="a" style="left:1px;top:488px;width:25px;height:1px;background:#c4c4c4;"></div>
<div class="t" style="left:6.52px;top:474.00px;font-size:12px;line-height:12px;color:#222;">13</div>
<div class="a" style="left:1px;top:509px;width:25px;height:1px;background:#c4c4c4;"></div>
<div class="t" style="left:6.52px;top:495.00px;font-size:12px;line-height:12px;color:#222;">14</div>
<div class="a" style="left:1px;top:526px;width:25px;height:1px;background:#c4c4c4;"></div>
<div class="t" style="left:6.52px;top:512.00px;font-size:12px;line-height:12px;color:#222;">15</div>
<div class="a" style="left:1px;top:546px;width:25px;height:1px;background:#c4c4c4;"></div>
<div class="t" style="left:6.52px;top:532.00px;font-size:12px;line-height:12px;color:#222;">16</div>
<div class="a" style="left:1px;top:566px;width:25px;height:1px;background:#c4c4c4;"></div>
<div class="t" style="left:6.52px;top:552.00px;font-size:12px;line-height:12px;color:#222;">17</div>
<div class="a" style="left:1px;top:586px;width:25px;height:1px;background:#c4c4c4;"></div>
<div class="t" style="left:6.52px;top:572.00px;font-size:12px;line-height:12px;color:#222;">18</div>
<div class="a" style="left:1px;top:606px;width:25px;height:1px;background:#c4c4c4;"></div>
<div class="t" style="left:6.52px;top:592.00px;font-size:12px;line-height:12px;color:#222;">19</div>
<div class="a" style="left:1px;top:626px;width:25px;height:1px;background:#c4c4c4;"></div>
<div class="t" style="left:6.52px;top:612.00px;font-size:12px;line-height:12px;color:#222;">20</div>
<div class="a" style="left:1px;top:646px;width:25px;height:1px;background:#c4c4c4;"></div>
<div class="t" style="left:6.52px;top:632.00px;font-size:12px;line-height:12px;color:#222;">21</div>
<div class="a" style="left:1px;top:666px;width:25px;height:1px;background:#c4c4c4;"></div>
<div class="t" style="left:6.52px;top:652.00px;font-size:12px;line-height:12px;color:#222;">22</div>
<div class="a" style="left:26px;top:228px;width:1px;height:429px;background:#9b9b9b;"></div>
<div class="a" style="left:27px;top:228px;width:1034px;height:50px;background:#d4d2d5;"></div>
<div class="a" style="left:27px;top:510px;width:1034px;height:16px;background:#adaaad;"></div>
<div class="a" style="left:26px;top:244px;width:1035px;height:1px;background:#a9a9a9;"></div>
<div class="a" style="left:26px;top:261px;width:1035px;height:1px;background:#a9a9a9;"></div>
<div class="a" style="left:26px;top:278px;width:1035px;height:1px;background:#a9a9a9;"></div>
<div class="a" style="left:74px;top:244px;width:187px;height:17px;background:#d4d2d5;"></div>
<div class="a" style="left:262px;top:244px;width:246px;height:17px;background:#d4d2d5;"></div>
<div class="a" style="left:73px;top:228px;width:1px;height:50px;background:#a9a9a9;"></div>
<div class="a" style="left:261px;top:228px;width:1px;height:50px;background:#a9a9a9;"></div>
<div class="a" style="left:508px;top:228px;width:1px;height:50px;background:#a9a9a9;"></div>
<div class="a" style="left:1060px;top:228px;width:1px;height:50px;background:#a9a9a9;"></div>
<div class="a" style="left:140px;top:262px;width:1px;height:16px;background:#a9a9a9;"></div>
<div class="a" style="left:202px;top:262px;width:1px;height:16px;background:#a9a9a9;"></div>
<div class="a" style="left:330px;top:262px;width:1px;height:16px;background:#a9a9a9;"></div>
<div class="a" style="left:391px;top:262px;width:1px;height:16px;background:#a9a9a9;"></div>
<div class="a" style="left:445px;top:262px;width:1px;height:16px;background:#a9a9a9;"></div>
<div class="a" style="left:569px;top:262px;width:1px;height:16px;background:#a9a9a9;"></div>
<div class="a" style="left:619px;top:262px;width:1px;height:16px;background:#a9a9a9;"></div>
<div class="a" style="left:752px;top:262px;width:1px;height:16px;background:#a9a9a9;"></div>
<div class="a" style="left:803px;top:262px;width:1px;height:16px;background:#a9a9a9;"></div>
<div class="a" style="left:928px;top:262px;width:1px;height:16px;background:#a9a9a9;"></div>
<div class="a" style="left:1010px;top:262px;width:1px;height:16px;background:#a9a9a9;"></div>
<div class="a" style="left:701px;top:245px;width:1px;height:33px;background:#a9a9a9;"></div>
<div class="a" style="left:885px;top:245px;width:1px;height:33px;background:#a9a9a9;"></div>
<div class="a" style="left:26px;top:299px;width:1035px;height:1px;background:#a9a9a9;"></div>
<div class="a" style="left:26px;top:320px;width:1035px;height:1px;background:#a9a9a9;"></div>
<div class="a" style="left:26px;top:341px;width:1035px;height:1px;background:#a9a9a9;"></div>
<div class="a" style="left:26px;top:362px;width:1035px;height:1px;background:#a9a9a9;"></div>
<div class="a" style="left:26px;top:383px;width:1035px;height:1px;background:#a9a9a9;"></div>
<div class="a" style="left:26px;top:404px;width:1035px;height:1px;background:#a9a9a9;"></div>
<div class="a" style="left:26px;top:425px;width:1035px;height:1px;background:#a9a9a9;"></div>
<div class="a" style="left:26px;top:446px;width:1035px;height:1px;background:#a9a9a9;"></div>
<div class="a" style="left:26px;top:467px;width:1035px;height:1px;background:#a9a9a9;"></div>
<div class="a" style="left:26px;top:488px;width:1035px;height:1px;background:#a9a9a9;"></div>
<div class="a" style="left:26px;top:509px;width:1035px;height:1px;background:#a9a9a9;"></div>
<div class="a" style="left:73px;top:278px;width:1px;height:231px;background:#a9a9a9;"></div>
<div class="a" style="left:140px;top:278px;width:1px;height:231px;background:#a9a9a9;"></div>
<div class="a" style="left:202px;top:278px;width:1px;height:231px;background:#a9a9a9;"></div>
<div class="a" style="left:261px;top:278px;width:1px;height:231px;background:#a9a9a9;"></div>
<div class="a" style="left:330px;top:278px;width:1px;height:231px;background:#a9a9a9;"></div>
<div class="a" style="left:391px;top:278px;width:1px;height:231px;background:#a9a9a9;"></div>
<div class="a" style="left:445px;top:278px;width:1px;height:231px;background:#a9a9a9;"></div>
<div class="a" style="left:508px;top:278px;width:1px;height:231px;background:#a9a9a9;"></div>
<div class="a" style="left:569px;top:278px;width:1px;height:231px;background:#a9a9a9;"></div>
<div class="a" style="left:619px;top:278px;width:1px;height:231px;background:#a9a9a9;"></div>
<div class="a" style="left:701px;top:278px;width:1px;height:231px;background:#a9a9a9;"></div>
<div class="a" style="left:752px;top:278px;width:1px;height:231px;background:#a9a9a9;"></div>
<div class="a" style="left:803px;top:278px;width:1px;height:231px;background:#a9a9a9;"></div>
<div class="a" style="left:885px;top:278px;width:1px;height:231px;background:#a9a9a9;"></div>
<div class="a" style="left:928px;top:278px;width:1px;height:231px;background:#a9a9a9;"></div>
<div class="a" style="left:1010px;top:278px;width:1px;height:231px;background:#a9a9a9;"></div>
<div class="a" style="left:1060px;top:278px;width:1px;height:231px;background:#a9a9a9;"></div>
<div class="a" style="left:26px;top:526px;width:1035px;height:1px;background:#8e8e8e;"></div>
<div class="a" style="left:261px;top:509px;width:1px;height:18px;background:#8e8e8e;"></div>
<div class="a" style="left:330px;top:509px;width:1px;height:18px;background:#8e8e8e;"></div>
<div class="a" style="left:391px;top:509px;width:1px;height:18px;background:#8e8e8e;"></div>
<div class="a" style="left:445px;top:509px;width:1px;height:18px;background:#8e8e8e;"></div>
<div class="a" style="left:508px;top:509px;width:1px;height:18px;background:#8e8e8e;"></div>
<div class="a" style="left:569px;top:509px;width:1px;height:18px;background:#8e8e8e;"></div>
<div class="a" style="left:619px;top:509px;width:1px;height:18px;background:#8e8e8e;"></div>
<div class="a" style="left:701px;top:509px;width:1px;height:18px;background:#8e8e8e;"></div>
<div class="a" style="left:752px;top:509px;width:1px;height:18px;background:#8e8e8e;"></div>
<div class="a" style="left:803px;top:509px;width:1px;height:18px;background:#8e8e8e;"></div>
<div class="a" style="left:885px;top:509px;width:1px;height:18px;background:#8e8e8e;"></div>
<div class="a" style="left:928px;top:509px;width:1px;height:18px;background:#8e8e8e;"></div>
<div class="a" style="left:1010px;top:509px;width:1px;height:18px;background:#8e8e8e;"></div>
<div class="a" style="left:1060px;top:509px;width:1px;height:18px;background:#8e8e8e;"></div>
<div class="t" style="left:135.20px;top:239.00px;font-size:11px;line-height:11px;color:#000;letter-spacing:2.410px;">PERIODO</div>
<div class="t" style="left:352.80px;top:239.00px;font-size:11px;line-height:11px;color:#000;letter-spacing:2.381px;">TOTALES</div>
<div class="t" style="left:697.90px;top:231.00px;font-size:11px;line-height:11px;color:#000;letter-spacing:2.320px;">IMPUESTOS RETENIDOS</div>
<div class="t" style="left:595.20px;top:248.00px;font-size:11px;line-height:11px;color:#000;letter-spacing:-0.072px;">ISR</div>
<div class="t" style="left:783.00px;top:248.00px;font-size:11px;line-height:11px;color:#000;transform:scaleX(1.1464);">IVA</div>
<div class="t" style="left:960.90px;top:248.00px;font-size:11px;line-height:11px;color:#000;letter-spacing:-0.593px;">IEPS</div>
<div class="t" style="left:36.40px;top:265.30px;font-size:11px;line-height:11px;color:#000;transform:scaleX(0.8662);">CURP</div>
<div class="t" style="left:83.00px;top:265.30px;font-size:11px;line-height:11px;color:#000;letter-spacing:-0.376px;">Mes inicial</div>
<div class="t" style="left:149.80px;top:265.30px;font-size:11px;line-height:11px;color:#000;letter-spacing:-0.179px;">Mes final</div>
<div class="t" style="left:211.80px;top:265.30px;font-size:11px;line-height:11px;color:#000;letter-spacing:-0.235px;">Ejercicio</div>
<div class="t" style="left:271.20px;top:265.30px;font-size:11px;line-height:11px;color:#000;letter-spacing:-0.196px;">Operación</div>
<div class="t" style="left:339.80px;top:265.30px;font-size:11px;line-height:11px;color:#000;letter-spacing:-0.101px;">Gravado</div>
<div class="t" style="left:400.80px;top:265.30px;font-size:11px;line-height:11px;color:#000;letter-spacing:0.050px;">Exento</div>
<div class="t" style="left:454.90px;top:265.30px;font-size:11px;line-height:11px;color:#000;letter-spacing:-0.021px;">Retenido</div>
<div class="t" style="left:526.60px;top:265.30px;font-size:11px;line-height:11px;color:#000;letter-spacing:-0.426px;">Base</div>
<div class="t" style="left:578.60px;top:265.30px;font-size:11px;line-height:11px;color:#000;letter-spacing:0.005px;">Monto</div>
<div class="t" style="left:628.90px;top:265.30px;font-size:11px;line-height:11px;color:#000;letter-spacing:-0.128px;">Tipo de pago</div>
<div class="t" style="left:714.50px;top:265.30px;font-size:11px;line-height:11px;color:#000;letter-spacing:-0.426px;">Base</div>
<div class="t" style="left:761.80px;top:265.30px;font-size:11px;line-height:11px;color:#000;letter-spacing:0.005px;">Monto</div>
<div class="t" style="left:812.80px;top:265.30px;font-size:11px;line-height:11px;color:#000;letter-spacing:-0.128px;">Tipo de pago</div>
<div class="t" style="left:894.80px;top:265.30px;font-size:11px;line-height:11px;color:#000;letter-spacing:-0.426px;">Base</div>
<div class="t" style="left:937.90px;top:265.30px;font-size:11px;line-height:11px;color:#000;letter-spacing:-0.128px;">Tipo de pago</div>
<div class="t" style="left:1019.90px;top:265.30px;font-size:11px;line-height:11px;color:#000;letter-spacing:0.005px;">Monto</div>
<div class="t" style="left:131.57px;top:284.00px;font-size:11px;line-height:11px;color:#7a7a7a;">6</div>
<div class="t" style="left:193.57px;top:284.00px;font-size:11px;line-height:11px;color:#7a7a7a;">6</div>
<div class="t" style="left:234.22px;top:284.00px;font-size:11px;line-height:11px;color:#7a7a7a;">2020</div>
<div class="t" style="left:300.17px;top:284.00px;font-size:11px;line-height:11px;color:#7a7a7a;">41.38</div>
<div class="t" style="left:361.17px;top:284.00px;font-size:11px;line-height:11px;color:#7a7a7a;">41.38</div>
<div class="t" style="left:421.28px;top:284.00px;font-size:11px;line-height:11px;color:#7a7a7a;">0.00</div>
<div class="t" style="left:484.28px;top:284.00px;font-size:11px;line-height:11px;color:#7a7a7a;">4.13</div>
<div class="t" style="left:539.17px;top:284.00px;font-size:11px;line-height:11px;color:#7a7a7a;">41.38</div>
<div class="t" style="left:595.28px;top:284.00px;font-size:11px;line-height:11px;color:#7a7a7a;">0.82</div>
<div class="t" style="left:620.80px;top:284.00px;font-size:11px;line-height:11px;color:#7a7a7a;letter-spacing:-0.062px;">Pago definitivo</div>
<div class="t" style="left:728.28px;top:284.00px;font-size:11px;line-height:11px;color:#7a7a7a;">6.62</div>
<div class="t" style="left:779.28px;top:284.00px;font-size:11px;line-height:11px;color:#7a7a7a;">3.31</div>
<div class="t" style="left:804.80px;top:284.00px;font-size:11px;line-height:11px;color:#7a7a7a;letter-spacing:-0.062px;">Pago definitivo</div>
<div class="t" style="left:131.57px;top:305.00px;font-size:11px;line-height:11px;color:#7a7a7a;">6</div>
<div class="t" style="left:193.57px;top:305.00px;font-size:11px;line-height:11px;color:#7a7a7a;">6</div>
<div class="t" style="left:234.22px;top:305.00px;font-size:11px;line-height:11px;color:#7a7a7a;">2020</div>
<div class="t" style="left:300.17px;top:305.00px;font-size:11px;line-height:11px;color:#7a7a7a;">20.69</div>
<div class="t" style="left:361.17px;top:305.00px;font-size:11px;line-height:11px;color:#7a7a7a;">20.69</div>
<div class="t" style="left:421.28px;top:305.00px;font-size:11px;line-height:11px;color:#7a7a7a;">0.00</div>
<div class="t" style="left:484.28px;top:305.00px;font-size:11px;line-height:11px;color:#7a7a7a;">2.06</div>
<div class="t" style="left:539.17px;top:305.00px;font-size:11px;line-height:11px;color:#7a7a7a;">20.69</div>
<div class="t" style="left:595.28px;top:305.00px;font-size:11px;line-height:11px;color:#7a7a7a;">0.41</div>
<div class="t" style="left:620.80px;top:305.00px;font-size:11px;line-height:11px;color:#7a7a7a;letter-spacing:-0.062px;">Pago definitivo</div>
<div class="t" style="left:728.28px;top:305.00px;font-size:11px;line-height:11px;color:#7a7a7a;">3.31</div>
<div class="t" style="left:779.28px;top:305.00px;font-size:11px;line-height:11px;color:#7a7a7a;">1.65</div>
<div class="t" style="left:804.80px;top:305.00px;font-size:11px;line-height:11px;color:#7a7a7a;letter-spacing:-0.062px;">Pago definitivo</div>
<div class="t" style="left:131.57px;top:326.00px;font-size:11px;line-height:11px;color:#111;">6</div>
<div class="t" style="left:193.57px;top:326.00px;font-size:11px;line-height:11px;color:#111;">6</div>
<div class="t" style="left:234.22px;top:326.00px;font-size:11px;line-height:11px;color:#111;">2020</div>
<div class="t" style="left:300.17px;top:326.00px;font-size:11px;line-height:11px;color:#111;">31.77</div>
<div class="t" style="left:361.17px;top:326.00px;font-size:11px;line-height:11px;color:#111;">31.77</div>
<div class="t" style="left:421.28px;top:326.00px;font-size:11px;line-height:11px;color:#111;">0.00</div>
<div class="t" style="left:484.28px;top:326.00px;font-size:11px;line-height:11px;color:#111;">2.66</div>
<div class="t" style="left:539.17px;top:326.00px;font-size:11px;line-height:11px;color:#111;">31.77</div>
<div class="t" style="left:595.28px;top:326.00px;font-size:11px;line-height:11px;color:#111;">0.12</div>
<div class="t" style="left:620.80px;top:326.00px;font-size:11px;line-height:11px;color:#111;letter-spacing:-0.062px;">Pago definitivo</div>
<div class="t" style="left:728.28px;top:326.00px;font-size:11px;line-height:11px;color:#111;">5.08</div>
<div class="t" style="left:779.28px;top:326.00px;font-size:11px;line-height:11px;color:#111;">2.54</div>
<div class="t" style="left:804.80px;top:326.00px;font-size:11px;line-height:11px;color:#111;letter-spacing:-0.062px;">Pago definitivo</div>
<div class="t" style="left:131.57px;top:347.00px;font-size:11px;line-height:11px;color:#111;">6</div>
<div class="t" style="left:193.57px;top:347.00px;font-size:11px;line-height:11px;color:#111;">6</div>
<div class="t" style="left:234.22px;top:347.00px;font-size:11px;line-height:11px;color:#111;">2020</div>
<div class="t" style="left:300.17px;top:347.00px;font-size:11px;line-height:11px;color:#111;">20.69</div>
<div class="t" style="left:361.17px;top:347.00px;font-size:11px;line-height:11px;color:#111;">20.69</div>
<div class="t" style="left:421.28px;top:347.00px;font-size:11px;line-height:11px;color:#111;">0.00</div>
<div class="t" style="left:484.28px;top:347.00px;font-size:11px;line-height:11px;color:#111;">2.06</div>
<div class="t" style="left:539.17px;top:347.00px;font-size:11px;line-height:11px;color:#111;">20.69</div>
<div class="t" style="left:595.28px;top:347.00px;font-size:11px;line-height:11px;color:#111;">0.41</div>
<div class="t" style="left:620.80px;top:347.00px;font-size:11px;line-height:11px;color:#111;letter-spacing:-0.062px;">Pago definitivo</div>
<div class="t" style="left:728.28px;top:347.00px;font-size:11px;line-height:11px;color:#111;">3.31</div>
<div class="t" style="left:779.28px;top:347.00px;font-size:11px;line-height:11px;color:#111;">1.65</div>
<div class="t" style="left:804.80px;top:347.00px;font-size:11px;line-height:11px;color:#111;letter-spacing:-0.062px;">Pago definitivo</div>
<div class="t" style="left:131.57px;top:368.00px;font-size:11px;line-height:11px;color:#111;">7</div>
<div class="t" style="left:193.57px;top:368.00px;font-size:11px;line-height:11px;color:#111;">7</div>
<div class="t" style="left:234.22px;top:368.00px;font-size:11px;line-height:11px;color:#111;">2020</div>
<div class="t" style="left:294.04px;top:368.00px;font-size:11px;line-height:11px;color:#111;">568.26</div>
<div class="t" style="left:355.04px;top:368.00px;font-size:11px;line-height:11px;color:#111;">568.26</div>
<div class="t" style="left:421.28px;top:368.00px;font-size:11px;line-height:11px;color:#111;">0.00</div>
<div class="t" style="left:478.17px;top:368.00px;font-size:11px;line-height:11px;color:#111;">47.73</div>
<div class="t" style="left:533.04px;top:368.00px;font-size:11px;line-height:11px;color:#111;">568.26</div>
<div class="t" style="left:595.28px;top:368.00px;font-size:11px;line-height:11px;color:#111;">2.27</div>
<div class="t" style="left:620.80px;top:368.00px;font-size:11px;line-height:11px;color:#111;letter-spacing:-0.062px;">Pago definitivo</div>
<div class="t" style="left:722.17px;top:368.00px;font-size:11px;line-height:11px;color:#111;">90.92</div>
<div class="t" style="left:773.17px;top:368.00px;font-size:11px;line-height:11px;color:#111;">45.46</div>
<div class="t" style="left:804.80px;top:368.00px;font-size:11px;line-height:11px;color:#111;letter-spacing:-0.062px;">Pago definitivo</div>
<div class="t" style="left:131.57px;top:389.00px;font-size:11px;line-height:11px;color:#111;">7</div>
<div class="t" style="left:193.57px;top:389.00px;font-size:11px;line-height:11px;color:#111;">7</div>
<div class="t" style="left:234.22px;top:389.00px;font-size:11px;line-height:11px;color:#111;">2020</div>
<div class="t" style="left:294.04px;top:389.00px;font-size:11px;line-height:11px;color:#111;">828.04</div>
<div class="t" style="left:355.04px;top:389.00px;font-size:11px;line-height:11px;color:#111;">828.04</div>
<div class="t" style="left:421.28px;top:389.00px;font-size:11px;line-height:11px;color:#111;">0.00</div>
<div class="t" style="left:478.17px;top:389.00px;font-size:11px;line-height:11px;color:#111;">70.21</div>
<div class="t" style="left:533.04px;top:389.00px;font-size:11px;line-height:11px;color:#111;">828.04</div>
<div class="t" style="left:589.17px;top:389.00px;font-size:11px;line-height:11px;color:#111;">16.56</div>
<div class="t" style="left:620.80px;top:389.00px;font-size:11px;line-height:11px;color:#111;letter-spacing:-0.062px;">Pago definitivo</div>
<div class="t" style="left:716.04px;top:389.00px;font-size:11px;line-height:11px;color:#111;">107.30</div>
<div class="t" style="left:773.17px;top:389.00px;font-size:11px;line-height:11px;color:#111;">53.65</div>
<div class="t" style="left:804.80px;top:389.00px;font-size:11px;line-height:11px;color:#111;letter-spacing:-0.062px;">Pago definitivo</div>
<div class="t" style="left:131.57px;top:410.00px;font-size:11px;line-height:11px;color:#7a7a7a;">8</div>
<div class="t" style="left:193.57px;top:410.00px;font-size:11px;line-height:11px;color:#7a7a7a;">8</div>
<div class="t" style="left:234.22px;top:410.00px;font-size:11px;line-height:11px;color:#7a7a7a;">2020</div>
<div class="t" style="left:284.87px;top:410.00px;font-size:11px;line-height:11px;color:#7a7a7a;">1,868.73</div>
<div class="t" style="left:345.87px;top:410.00px;font-size:11px;line-height:11px;color:#7a7a7a;">1,868.73</div>
<div class="t" style="left:421.28px;top:410.00px;font-size:11px;line-height:11px;color:#7a7a7a;">0.00</div>
<div class="t" style="left:472.87px;top:410.00px;font-size:11px;line-height:11px;color:#7a7a7a;">117.21</div>
<div class="t" style="left:523.87px;top:410.00px;font-size:11px;line-height:11px;color:#7a7a7a;">1,868.73</div>
<div class="t" style="left:589.17px;top:410.00px;font-size:11px;line-height:11px;color:#7a7a7a;">37.37</div>
<div class="t" style="left:620.80px;top:410.00px;font-size:11px;line-height:11px;color:#7a7a7a;letter-spacing:-0.062px;">Pago definitivo</div>
<div class="t" style="left:716.04px;top:410.00px;font-size:11px;line-height:11px;color:#7a7a7a;">159.68</div>
<div class="t" style="left:773.17px;top:410.00px;font-size:11px;line-height:11px;color:#7a7a7a;">79.84</div>
<div class="t" style="left:804.80px;top:410.00px;font-size:11px;line-height:11px;color:#7a7a7a;letter-spacing:-0.062px;">Pago definitivo</div>
<div class="t" style="left:131.57px;top:431.00px;font-size:11px;line-height:11px;color:#111;">8</div>
<div class="t" style="left:193.57px;top:431.00px;font-size:11px;line-height:11px;color:#111;">8</div>
<div class="t" style="left:234.22px;top:431.00px;font-size:11px;line-height:11px;color:#111;">2020</div>
<div class="t" style="left:294.04px;top:431.00px;font-size:11px;line-height:11px;color:#111;">870.73</div>
<div class="t" style="left:355.04px;top:431.00px;font-size:11px;line-height:11px;color:#111;">870.73</div>
<div class="t" style="left:421.28px;top:431.00px;font-size:11px;line-height:11px;color:#111;">0.00</div>
<div class="t" style="left:478.17px;top:431.00px;font-size:11px;line-height:11px;color:#111;">73.13</div>
<div class="t" style="left:533.04px;top:431.00px;font-size:11px;line-height:11px;color:#111;">870.73</div>
<div class="t" style="left:595.28px;top:431.00px;font-size:11px;line-height:11px;color:#111;">3.48</div>
<div class="t" style="left:620.80px;top:431.00px;font-size:11px;line-height:11px;color:#111;letter-spacing:-0.062px;">Pago definitivo</div>
<div class="t" style="left:716.04px;top:431.00px;font-size:11px;line-height:11px;color:#111;">139.31</div>
<div class="t" style="left:773.17px;top:431.00px;font-size:11px;line-height:11px;color:#111;">69.65</div>
<div class="t" style="left:804.80px;top:431.00px;font-size:11px;line-height:11px;color:#111;letter-spacing:-0.062px;">Pago definitivo</div>
<div class="t" style="left:131.57px;top:452.00px;font-size:11px;line-height:11px;color:#111;">8</div>
<div class="t" style="left:193.57px;top:452.00px;font-size:11px;line-height:11px;color:#111;">8</div>
<div class="t" style="left:234.22px;top:452.00px;font-size:11px;line-height:11px;color:#111;">2020</div>
<div class="t" style="left:284.87px;top:452.00px;font-size:11px;line-height:11px;color:#111;">1,013.71</div>
<div class="t" style="left:345.87px;top:452.00px;font-size:11px;line-height:11px;color:#111;">1,013.71</div>
<div class="t" style="left:421.28px;top:452.00px;font-size:11px;line-height:11px;color:#111;">0.00</div>
<div class="t" style="left:478.17px;top:452.00px;font-size:11px;line-height:11px;color:#111;">89.09</div>
<div class="t" style="left:523.87px;top:452.00px;font-size:11px;line-height:11px;color:#111;">1,013.71</div>
<div class="t" style="left:589.17px;top:452.00px;font-size:11px;line-height:11px;color:#111;">20.27</div>
<div class="t" style="left:620.80px;top:452.00px;font-size:11px;line-height:11px;color:#111;letter-spacing:-0.062px;">Pago definitivo</div>
<div class="t" style="left:716.04px;top:452.00px;font-size:11px;line-height:11px;color:#111;">137.65</div>
<div class="t" style="left:773.17px;top:452.00px;font-size:11px;line-height:11px;color:#111;">68.82</div>
<div class="t" style="left:804.80px;top:452.00px;font-size:11px;line-height:11px;color:#111;letter-spacing:-0.062px;">Pago definitivo</div>
<div class="t" style="left:131.57px;top:473.00px;font-size:11px;line-height:11px;color:#111;">9</div>
<div class="t" style="left:193.57px;top:473.00px;font-size:11px;line-height:11px;color:#111;">9</div>
<div class="t" style="left:234.22px;top:473.00px;font-size:11px;line-height:11px;color:#111;">2020</div>
<div class="t" style="left:284.87px;top:473.00px;font-size:11px;line-height:11px;color:#111;">1,638.05</div>
<div class="t" style="left:345.87px;top:473.00px;font-size:11px;line-height:11px;color:#111;">1,638.05</div>
<div class="t" style="left:421.28px;top:473.00px;font-size:11px;line-height:11px;color:#111;">0.00</div>
<div class="t" style="left:472.04px;top:473.00px;font-size:11px;line-height:11px;color:#111;">140.84</div>
<div class="t" style="left:523.87px;top:473.00px;font-size:11px;line-height:11px;color:#111;">1,638.05</div>
<div class="t" style="left:589.17px;top:473.00px;font-size:11px;line-height:11px;color:#111;">32.76</div>
<div class="t" style="left:620.80px;top:473.00px;font-size:11px;line-height:11px;color:#111;letter-spacing:-0.062px;">Pago definitivo</div>
<div class="t" style="left:716.04px;top:473.00px;font-size:11px;line-height:11px;color:#111;">216.16</div>
<div class="t" style="left:767.04px;top:473.00px;font-size:11px;line-height:11px;color:#111;">108.08</div>
<div class="t" style="left:804.80px;top:473.00px;font-size:11px;line-height:11px;color:#111;letter-spacing:-0.062px;">Pago definitivo</div>
<div class="t" style="left:131.57px;top:494.00px;font-size:11px;line-height:11px;color:#111;">9</div>
<div class="t" style="left:193.57px;top:494.00px;font-size:11px;line-height:11px;color:#111;">9</div>
<div class="t" style="left:234.22px;top:494.00px;font-size:11px;line-height:11px;color:#111;">2020</div>
<div class="t" style="left:284.87px;top:494.00px;font-size:11px;line-height:11px;color:#111;">1,414.61</div>
<div class="t" style="left:345.87px;top:494.00px;font-size:11px;line-height:11px;color:#111;">1,414.61</div>
<div class="t" style="left:421.28px;top:494.00px;font-size:11px;line-height:11px;color:#111;">0.00</div>
<div class="t" style="left:472.87px;top:494.00px;font-size:11px;line-height:11px;color:#111;">118.81</div>
<div class="t" style="left:523.87px;top:494.00px;font-size:11px;line-height:11px;color:#111;">1,414.61</div>
<div class="t" style="left:595.28px;top:494.00px;font-size:11px;line-height:11px;color:#111;">5.65</div>
<div class="t" style="left:620.80px;top:494.00px;font-size:11px;line-height:11px;color:#111;letter-spacing:-0.062px;">Pago definitivo</div>
<div class="t" style="left:716.04px;top:494.00px;font-size:11px;line-height:11px;color:#111;">226.33</div>
<div class="t" style="left:767.87px;top:494.00px;font-size:11px;line-height:11px;color:#111;">113.16</div>
<div class="t" style="left:804.80px;top:494.00px;font-size:11px;line-height:11px;color:#111;letter-spacing:-0.062px;">Pago definitivo</div>
<div class="t" style="left:284.87px;top:513.00px;font-size:11px;line-height:11px;color:#000;">6,385.86</div>
<div class="t" style="left:345.87px;top:513.00px;font-size:11px;line-height:11px;color:#000;">6,385.86</div>
<div class="t" style="left:421.28px;top:513.00px;font-size:11px;line-height:11px;color:#000;">0.00</div>
<div class="t" style="left:472.04px;top:513.00px;font-size:11px;line-height:11px;color:#000;">544.53</div>
<div class="t" style="left:523.87px;top:513.00px;font-size:11px;line-height:11px;color:#000;">6,385.86</div>
<div class="t" style="left:589.17px;top:513.00px;font-size:11px;line-height:11px;color:#000;">81.52</div>
<div class="t" style="left:716.04px;top:513.00px;font-size:11px;line-height:11px;color:#000;">926.06</div>
<div class="t" style="left:767.04px;top:513.00px;font-size:11px;line-height:11px;color:#000;">463.01</div>
<div class="a" style="left:25px;top:228px;width:2px;height:33px;background:#217346;"></div>
<div class="a" style="left:1096px;top:208px;width:21px;height:450px;background:#e3e5e2;"></div>
<div class="a" style="left:1099px;top:210px;width:15px;height:15px;background:#ffffff;border:1px solid #b9b9b9;box-sizing:border-box;"></div>
<svg class="a" style="left:1103px;top:215px;" width="7" height="4" viewBox="0 0 7 4"><path d="M0 4h7l-3.5-4z" fill="#606060"/></svg>
<div class="a" style="left:1099px;top:225px;width:15px;height:398px;background:#ffffff;border:1px solid #b9b9b9;box-sizing:border-box;"></div>
<div class="a" style="left:1099px;top:623px;width:15px;height:20px;background:#dcdadc;"></div>
<div class="a" style="left:1099px;top:643px;width:15px;height:15px;background:#ffffff;border:1px solid #b9b9b9;box-sizing:border-box;"></div>
<svg class="a" style="left:1103px;top:649px;" width="7" height="4" viewBox="0 0 7 4"><path d="M0 0h7l-3.5 4z" fill="#606060"/></svg>
<div class="a" style="left:1px;top:658px;width:1116px;height:27px;background:#e3e5e2;"></div>
<div class="a" style="left:1px;top:657px;width:1095px;height:1px;background:#9b9b9b;"></div>
<div class="a" style="left:1px;top:685px;width:1116px;height:1px;background:#c6c6c6;"></div>
<svg class="a" style="left:28px;top:666px;" width="5" height="9" viewBox="0 0 5 9"><path d="M5 0v9l-5-4.5z" fill="#c0c0c0"/></svg>
<svg class="a" style="left:57px;top:666px;" width="5" height="9" viewBox="0 0 5 9"><path d="M0 0v9l5-4.5z" fill="#c0c0c0"/></svg>
<div class="a" style="left:101px;top:657px;width:212px;height:24px;background:#fcfefc;"></div>
<div class="a" style="left:101px;top:657px;width:1px;height:24px;background:#9b9b9b;"></div>
<div class="a" style="left:312px;top:657px;width:1px;height:24px;background:#9b9b9b;"></div>
<div class="a" style="left:101px;top:680px;width:212px;height:2px;background:#217346;"></div>
<div class="t" style="left:112.60px;top:665.00px;font-size:12.5px;line-height:12.5px;color:#1d6b3f;font-weight:700;letter-spacing:0.093px;">Convertir las constancias de re</div>
<svg class="a" style="left:346px;top:663px;" width="16" height="16" viewBox="0 0 16 16"><circle cx="8" cy="8" r="7.3" fill="none" stroke="#666" stroke-width="1.1"/><path d="M8 4v8M4 8h8" stroke="#666" stroke-width="1.6"/></svg>
<div class="a" style="left:670px;top:666px;width:2px;height:2px;background:#a0a0a0;"></div>
<div class="a" style="left:670px;top:670px;width:2px;height:2px;background:#a0a0a0;"></div>
<div class="a" style="left:670px;top:674px;width:2px;height:2px;background:#a0a0a0;"></div>
<div class="a" style="left:687px;top:664px;width:15px;height:15px;background:#ffffff;border:1px solid #b9b9b9;box-sizing:border-box;"></div>
<svg class="a" style="left:691px;top:668px;" width="4" height="7" viewBox="0 0 4 7"><path d="M4 0v7l-4-3.5z" fill="#606060"/></svg>
<div class="a" style="left:702px;top:664px;width:201px;height:15px;background:#dcdadc;"></div>
<div class="a" style="left:903px;top:664px;width:178px;height:15px;background:#ffffff;border:1px solid #b9b9b9;box-sizing:border-box;"></div>
<div class="a" style="left:1080px;top:664px;width:16px;height:15px;background:#ffffff;border:1px solid #b9b9b9;box-sizing:border-box;"></div>
<svg class="a" style="left:1086px;top:668px;" width="4" height="7" viewBox="0 0 4 7"><path d="M0 0v7l4-3.5z" fill="#606060"/></svg>
<div class="a" style="left:1px;top:686px;width:1116px;height:21px;background:#f3f2f5;"></div>
<svg class="a" style="left:9px;top:690px;" width="15" height="14" viewBox="0 0 15 14"><path d="M0.5 11.5V0.5H13.5V4M0.5 2.5H13.5M5 11.5H0.5" fill="none" stroke="#333"/><path d="M2 4.5H4.5M2 6.5H4.5M2 8.5H4.5" stroke="#333"/><circle cx="9.5" cy="8.5" r="3.9" fill="#fff" stroke="#333" stroke-width="1.2"/><rect x="8" y="7" width="3" height="3" fill="#333"/></svg>
<div class="a" style="left:806px;top:686px;width:40px;height:21px;background:#c8c6c4;"></div>
<svg class="a" style="left:819px;top:690px;" width="13" height="12" viewBox="0 0 13 12"><path d="M0.5 0.5h12v11h-12zM0.5 4.2h12M0.5 7.8h12M4.5 0.5v11M8.5 0.5v11" fill="none" stroke="#333" stroke-width="1"/></svg>
<svg class="a" style="left:859px;top:689px;" width="14" height="13" viewBox="0 0 14 13"><rect x="0.5" y="0.5" width="13" height="12" fill="#fff" stroke="#444"/><rect x="3.5" y="2.5" width="7" height="8" fill="#fff" stroke="#444"/><path d="M5 4.5H9M5 6.5H9M5 8.5H9" stroke="#444"/></svg>
<svg class="a" style="left:899px;top:689px;" width="14" height="13" viewBox="0 0 14 13"><rect x="0.5" y="0.5" width="13" height="12" fill="#fff" stroke="#444"/><path d="M0.5 7.5H8.5V0.5M3.5 0.5V7.5M5.5 0.5V7.5" fill="none" stroke="#444"/></svg>
<div class="a" style="left:932px;top:695px;width:9px;height:1px;background:#444;"></div>
<div class="a" style="left:945px;top:695px;width:100px;height:1px;background:#b0b0b0;"></div>
<div class="a" style="left:993px;top:690px;width:5px;height:11px;background:#6f6f6f;"></div>
<div class="a" style="left:1049px;top:695px;width:9px;height:1px;background:#444;"></div>
<div class="a" style="left:1053px;top:691px;width:1px;height:9px;background:#444;"></div>
<div class="t" style="left:1069.60px;top:691.00px;font-size:11px;line-height:11px;color:#444;letter-spacing:0.220px;">100%</div>
<div class="a" style="left:0px;top:35px;width:1px;height:673px;background:#217346;"></div>
<div class="a" style="left:1117px;top:35px;width:1px;height:673px;background:#217346;"></div>
<div class="a" style="left:0px;top:707px;width:1118px;height:1px;background:#217346;"></div>
</body></html>
